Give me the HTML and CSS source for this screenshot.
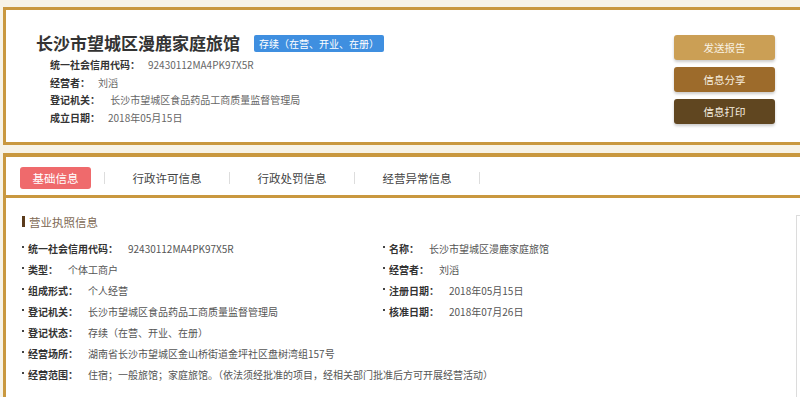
FILE: index.html
```html
<!DOCTYPE html>
<html lang="zh-CN">
<head>
    <meta charset="UTF-8">
    <meta name="viewport" content="width=device-width, initial-scale=1.0">
    <title>长沙市望城区漫鹿家庭旅馆</title>
    <link rel="stylesheet" href="styles.css">
</head>
<body>
    <div class="page">
        <div class="card card-head">
            <div class="head-main">
                <div class="company">
                    <h1>长沙市望城区漫鹿家庭旅馆</h1>
                    <span class="status-badge">存续（在营、开业、在册）</span>
                </div>
                <div class="head-row"><span class="head-label">统一社会信用代码：</span><span class="head-value">92430112MA4PK97X5R</span></div>
                <div class="head-row"><span class="head-label">经营者：</span><span class="head-value">刘滔</span></div>
                <div class="head-row"><span class="head-label">登记机关：</span><span class="head-value">&nbsp;长沙市望城区食品药品工商质量监督管理局</span></div>
                <div class="head-row"><span class="head-label">成立日期：</span><span class="head-value">2018年05月15日</span></div>
            </div>
            <div class="actions">
                <button class="btn btn-send">发送报告</button>
                <button class="btn btn-share">信息分享</button>
                <button class="btn btn-print">信息打印</button>
            </div>
        </div>

        <div class="card card-detail">
            <div class="tabs">
                <span class="tab active">基础信息</span>
                <span class="tab-sep"></span>
                <span class="tab">行政许可信息</span>
                <span class="tab-sep"></span>
                <span class="tab">行政处罚信息</span>
                <span class="tab-sep"></span>
                <span class="tab">经营异常信息</span>
                <span class="tab-sep"></span>
            </div>
            <div class="detail-body">
                <div class="info">
                    <div class="section-title">营业执照信息</div>
                    <div class="info-grid">
                        <div class="item"><span class="label">统一社会信用代码：</span><span class="value">92430112MA4PK97X5R</span></div>
                        <div class="item"><span class="label">名称：</span><span class="value">长沙市望城区漫鹿家庭旅馆</span></div>
                        <div class="item"><span class="label">类型：</span><span class="value">个体工商户</span></div>
                        <div class="item"><span class="label">经营者：</span><span class="value">刘滔</span></div>
                        <div class="item"><span class="label">组成形式：</span><span class="value">个人经营</span></div>
                        <div class="item"><span class="label">注册日期：</span><span class="value">2018年05月15日</span></div>
                        <div class="item"><span class="label">登记机关：</span><span class="value">长沙市望城区食品药品工商质量监督管理局</span></div>
                        <div class="item"><span class="label">核准日期：</span><span class="value">2018年07月26日</span></div>
                        <div class="item wide"><span class="label">登记状态：</span><span class="value">存续（在营、开业、在册）</span></div>
                        <div class="item wide"><span class="label">经营场所：</span><span class="value">湖南省长沙市望城区金山桥街道金坪社区盘树湾组157号</span></div>
                        <div class="item wide"><span class="label">经营范围：</span><span class="value">住宿；一般旅馆；家庭旅馆。（依法须经批准的项目，经相关部门批准后方可开展经营活动）</span></div>
                    </div>
                </div>
                <div class="side"></div>
            </div>
        </div>
    </div>
</body>
</html>
```

FILE: styles.css
```css
html, body {
    margin: 0;
    overflow: hidden;
}

body {
    background-color: #f7f3e7;
    font-family: "Noto Sans CJK SC", "Microsoft YaHei", sans-serif;
    color: #333;
}

.page {
    padding: 7px 0 0 3px;
}

.card {
    background-color: #fff;
    border: 3px solid #c9983f;
    border-right: none;
}

/* header card */
.card-head {
    display: flex;
    align-items: flex-start;
    padding: 22px 25px 15px 30px;
}

.head-main {
    flex: 1;
}

.company {
    display: flex;
    align-items: center;
    height: 22px;
    margin-bottom: 2px;
}

h1 {
    margin: 0;
    font-size: 17px;
    line-height: 22px;
    font-weight: bold;
    color: #333;
}

.status-badge {
    margin-left: 14px;
    padding: 0 5px;
    height: 17px;
    line-height: 17px;
    background-color: #3f8fe0;
    border-radius: 2px;
    color: #fff;
    font-size: 10px;
}

.head-row {
    padding-left: 14px;
    font-size: 10px;
    line-height: 17.7px;
}

.head-label {
    font-weight: bold;
    color: #333;
}

.head-value {
    margin-left: 8px;
    color: #666;
}

.actions {
    display: flex;
    flex-direction: column;
    gap: 7px;
    margin-top: 3px;
}

.btn {
    width: 101px;
    height: 25px;
    border: none;
    border-radius: 3px;
    color: #f8f1e2;
    font-family: inherit;
    font-size: 10.5px;
    box-shadow: 0 2px 3px rgba(0, 0, 0, 0.2);
    cursor: pointer;
}

.btn-send {
    background-color: #cb9f55;
}

.btn-share {
    background-color: #9d6b2b;
}

.btn-print {
    background-color: #604620;
}

/* detail card */
.card-detail {
    margin-top: 8px;
    border-top-width: 4px;
    border-bottom: none;
}

.tabs {
    display: flex;
    align-items: center;
    padding: 10px 0 6px 14px;
    border-bottom: 3px solid #c9983f;
}

.tab {
    width: 124px;
    height: 22px;
    line-height: 22px;
    text-align: center;
    font-size: 11.5px;
    color: #444;
}

.tab.active {
    width: 71px;
    margin-right: 13px;
    background-color: #ef6a6c;
    border-radius: 3px;
    color: #fff;
}

.tab-sep {
    width: 1px;
    height: 12px;
    background-color: #ddd;
}

.detail-body {
    display: flex;
    height: 199px;
}

.info {
    flex: 1;
    padding: 17px 0 0 16px;
}

.side {
    width: 3px;
    margin-top: 17px;
    border-top: 1px solid #dcdcdc;
    border-left: 1px solid #dcdcdc;
}

.section-title {
    display: flex;
    align-items: center;
    height: 14px;
    margin-bottom: 9px;
    font-size: 11.5px;
    color: #7e6a55;
}

.section-title::before {
    content: "";
    width: 3px;
    height: 11px;
    margin-right: 4px;
    background-color: #5b3b1c;
}

.info-grid {
    display: grid;
    grid-template-columns: 361px 1fr;
    grid-auto-rows: 21px;
    align-items: center;
    font-size: 10px;
}

.item {
    display: flex;
    align-items: center;
    white-space: nowrap;
}

.item.wide {
    grid-column: 1 / 3;
}

.item::before {
    content: "";
    width: 2px;
    height: 2px;
    margin: 0 4px 3px 0;
    background-color: #444;
}

.label {
    font-weight: bold;
    color: #333;
}

.value {
    margin-left: 10px;
    color: #555;
}
```
